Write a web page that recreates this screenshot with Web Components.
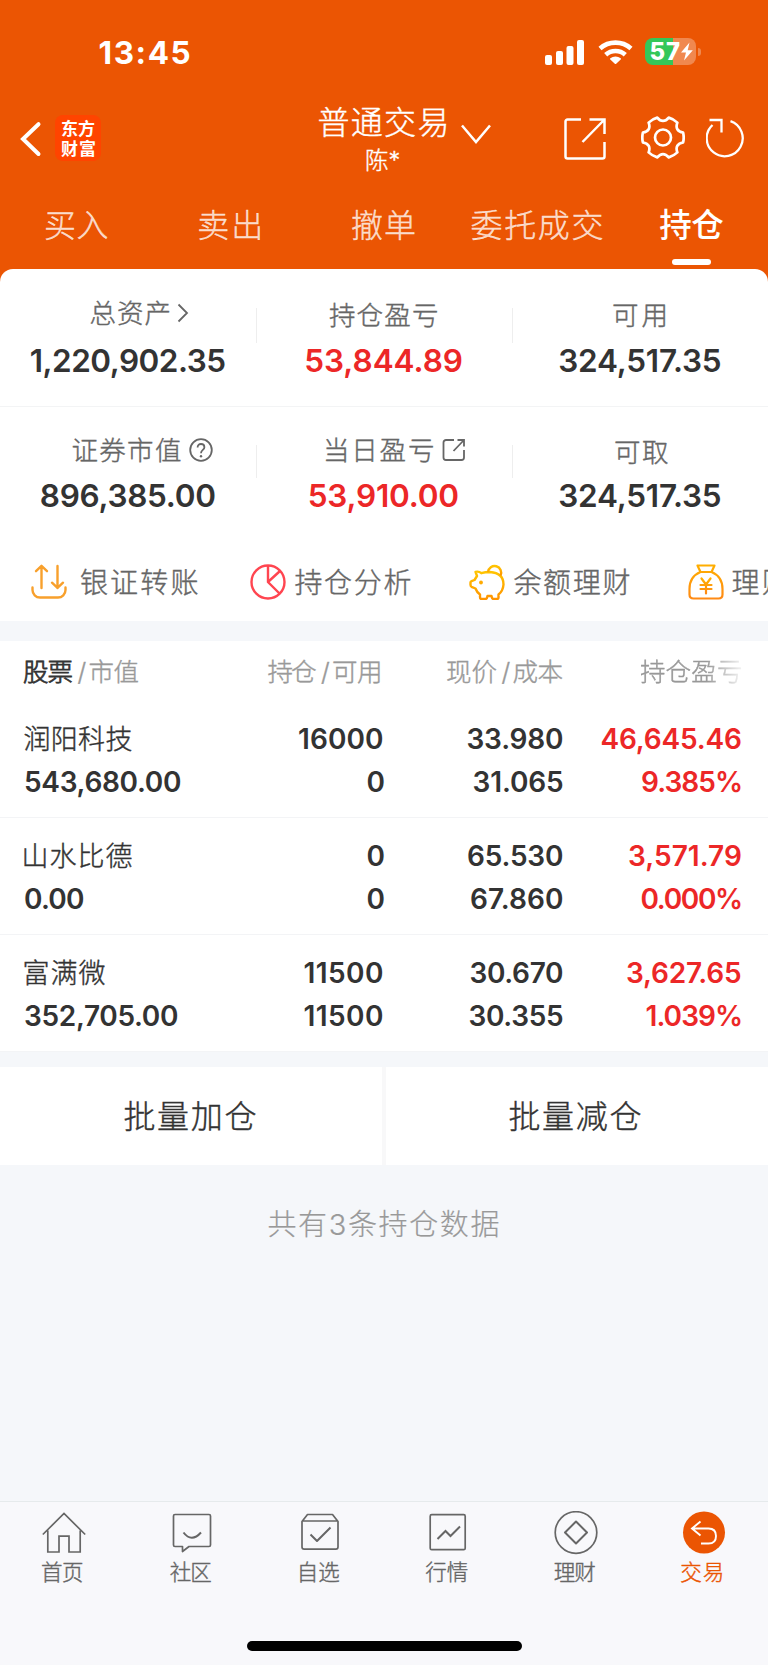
<!DOCTYPE html>
<html lang="zh-CN">
<head>
<meta charset="utf-8">
<title>普通交易 - 持仓</title>
<style>
html,body{margin:0;padding:0}
body{width:768px;height:1665px;overflow:hidden;background:#f5f7fa;font-family:Inter,"Noto Sans CJK SC",sans-serif;color:#333}
</style>
</head>
<body>
<trade-app></trade-app>
<script>
const FONT = 'Inter,"Noto Sans CJK SC",sans-serif';
const pen = document.createElement('canvas').getContext('2d');
const define = (name, html, after) => customElements.define(name, class extends HTMLElement {
  connectedCallback() {
    if (this.shadowRoot) return;
    const root = this.attachShadow({ mode: 'open' });
    const t = document.createElement('template');
    t.innerHTML = typeof html === 'function' ? html(this) : html;
    root.append(t.content.cloneNode(true));
    if (after) after(this, root);
  }
});

/* A line of text tracked so that its glyphs fill exactly w pixels. s: size, b: weight, h: line height.
   Light text gets a hairline stroke, which gives a weight between light and regular. */
define('fit-text', el => {
  const a = n => el.getAttribute(n), s = +a('s'), b = a('b') || 300, w = +a('w'), text = el.textContent;
  pen.font = `${b} ${s}px ${FONT}`;
  const m = pen.measureText(text), ink = m.actualBoundingBoxLeft + m.actualBoundingBoxRight;
  const n = [...text].length, gap = n > 1 ? (w - ink) / (n - 1) : 0;
  const light = b == 300;
  return `<style>:host{display:block;flex:none;width:${w}px;height:${a('h') || 40}px;line-height:${a('h') || 40}px;font-size:${s}px;font-weight:${b};white-space:nowrap}
  span{display:block;width:max-content;margin-left:${(m.actualBoundingBoxLeft - (light ? .6 : 0)).toFixed(2)}px;letter-spacing:${gap.toFixed(3)}px;-webkit-text-stroke:${light ? (a('k') || .4) : 0}px currentColor}</style><span><slot></slot></span>`;
});

/* Six flat teeth joined by hollow curves */
const gearPath = (cx, cy, R, inner, half) => {
  const p = (r, d) => `${(cx + r * Math.cos(d * Math.PI / 180)).toFixed(2)} ${(cy + r * Math.sin(d * Math.PI / 180)).toFixed(2)}`;
  let d = 'M' + p(R, -half);
  for (let k = 0; k < 6; k++) {
    const t = k * 60;
    d += `Q${p(R * 1.03, t)} ${p(R, t + half)}C${p(inner, t + 22)} ${p(inner, t + 38)} ${p(R, t + 60 - half)}`;
  }
  return d + 'Z';
};

const ICONS = {
  signal: [40, 26, '<g fill="#fff"><rect x="0" y="15" width="7" height="10" rx="2"/><rect x="11" y="11" width="7" height="14" rx="2"/><rect x="21.5" y="6" width="7" height="19" rx="2"/><rect x="32" y="0" width="7" height="25" rx="2"/></g>'],
  wifi: [36, 26, '<g fill="none" stroke="#fff" stroke-width="4.6"><path d="M2 9.5a23.5 23.5 0 0 1 31 0"/><path d="M7.7 15.8a14.5 14.5 0 0 1 19.6 0"/></g><path fill="#fff" d="M12.3 19.3a8.2 8.2 0 0 1 10.4 0q.7.6 0 1.3l-4.5 4.2q-.7.6-1.4 0l-4.5-4.2q-.7-.7 0-1.3z"/>'],
  back: [22, 36, '<path d="M18.5 3.2 3 18l15.500 15" fill="none" stroke="#fff" stroke-width="4" stroke-linecap="round" stroke-linejoin="miter"/>'],
  down: [32, 22, '<path d="M2 2.500 16 19 30 2.500" fill="none" stroke="#fff" stroke-width="2.500"/>'],
  share: [42, 42, '<g fill="none" stroke="#fff" stroke-width="2.500"><path d="M17 1.500H3.500a2 2 0 0 0-2 2v35a2 2 0 0 0 2 2h35a2 2 0 0 0 2-2V24"/><path d="M25.500 1.500h15V16M40.500 1.500 18.500 24"/></g>'],
  gear: [44, 43, `<g fill="none" stroke="#fff" stroke-width="2.700" stroke-linejoin="round"><path d="${gearPath(22, 21.5, 20.7, 15.6, 14)}"/><circle cx="22" cy="21.500" r="8"/></g>`],
  refresh: [40, 40, '<g fill="none" stroke="#fff" stroke-width="2.300"><path d="M6.500 7A18 18 0 1 0 24.500 3.200"/><path d="M3.500 2h12v12.500"/></g>'],
  more: [12, 20, '<path d="M1.500 1.500 10 10l-8.500 8.500" fill="none" stroke="#666" stroke-width="1.800"/>'],
  help: [24, 24, '<g fill="none" stroke="#666" stroke-width="1.800"><circle cx="12" cy="12" r="10.800"/><path d="M8.600 9.400c0-2 1.400-3.400 3.400-3.400s3.400 1.300 3.400 3.200c0 2.600-3.400 2.800-3.400 6"/></g><circle cx="12" cy="18.200" r="1.200" fill="#666"/>'],
  open: [24, 24, '<g fill="none" stroke="#666" stroke-width="1.800"><path d="M12 2H4a2.500 2.500 0 0 0-2.500 2.500v15A2.500 2.500 0 0 0 4 22h15.500a2.500 2.500 0 0 0 2.500-2.500V12"/><path d="M15.500 2H22v6.500M22 2 11.500 13"/></g>'],
  transfer: [36, 36, '<g fill="none" stroke="#f8a02c" stroke-width="2.400" stroke-linecap="round" stroke-linejoin="round"><path d="M10.500 24V2M5 7.200 10.500 1.800l5.500 5.400M26.500 2v22M21 18.700l5.500 5.200 5.500-5.200"/><path d="M1.500 23.500V26a7.500 7.500 0 0 0 7.500 7.500h18a7.500 7.500 0 0 0 7.500-7.500v-2.500"/></g>'],
  pie: [36, 36, '<g fill="none" stroke="#ff4550" stroke-width="2.400"><circle cx="18" cy="18" r="16.500"/><path d="M18 1.500V18L30 30M18 18 30 7"/></g>'],
  pig: [36, 36, '<defs><linearGradient id="g" x1="0" y1="0" x2="0" y2="1"><stop stop-color="#ffc400"/><stop offset="1" stop-color="#ff9400"/></linearGradient></defs><g fill="none" stroke="url(#g)" stroke-width="2.400" stroke-linejoin="round"><path d="M6.500 7.800Q10 7 12.300 9.200 16 8 21 8 34.500 9 34.500 20.500 34 27 29.500 30.500V33.500Q29.500 35 28 35H24.500Q23 35 22.500 32H18.500Q18 35 16.500 35H12.500Q11 35 11 33V30.500Q8 28.500 6.500 24.500L2.500 22.800Q1.500 22.200 1.500 20.700V18.500Q1.500 17.500 2.500 17.200L5.500 16 8 12Z"/><path d="M19 8a6.600 6.600 0 1 1 12.500 3.500"/></g><circle cx="12" cy="18.500" r="1.900" fill="#ffaa00"/>'],
  bag: [36, 36, '<defs><linearGradient id="h" x1="0" y1="0" x2="0" y2="1"><stop stop-color="#ffae00"/><stop offset="1" stop-color="#ff8a14"/></linearGradient></defs><g fill="none" stroke="url(#h)" stroke-width="2.200" stroke-linejoin="round" stroke-linecap="round"><path d="M9.500 1.500h17L23.500 8h-11zM12.500 8Q1.500 12.500 1.500 25V30.500Q1.500 34.500 5.500 34.500H30.500Q34.500 34.500 34.500 30.500V25Q34.500 12.500 23.500 8"/><path d="M13.500 14.500 18 20.500l4.500-6M12.500 21h11M12.500 25h11M18 21v8.500"/></g>'],
  home: [44, 44, '<g fill="none" stroke="#666" stroke-width="1.700"><path d="M.8 23.500 22 2.500l21.200 21M5.800 19.500V41H17V25.200h10V41h11.200V19.500"/></g>'],
  chat: [44, 44, '<g fill="none" stroke="#666" stroke-width="1.700" stroke-linejoin="round"><path d="M5 3.500h34q1.500 0 1.500 1.500v29q0 1.500-1.500 1.500H19l-6.500 5v-5H5q-1.500 0-1.500-1.500V5q0-1.500 1.500-1.500z"/><path d="M13.500 21.500q8 10.500 17.500 0" stroke-width="2"/></g>'],
  pick: [44, 44, '<g fill="none" stroke="#666" stroke-width="1.700" stroke-linejoin="round"><path d="M4 10.500V36q0 2.200 2.200 2.200h31.600q2.200 0 2.200-2.200V10.500L34.500 3.500h-25zM4 10h36"/><path d="m12.500 23.500 6.500 6.500L32.500 16.500" stroke-width="2"/></g>'],
  chart: [44, 44, '<g fill="none" stroke="#666" stroke-width="1.700"><rect x="4.200" y="3.700" width="35" height="35" rx="1.500"/><path d="m11.500 28 8-8 5 5 9.500-9.500" stroke-width="2"/></g>'],
  money: [44, 44, '<g fill="none" stroke="#666" stroke-width="1.700" stroke-linejoin="round"><circle cx="22" cy="21.500" r="20.800"/><path d="M22 10.500 33 21.500 22 32.500 11 21.500z" stroke-width="2"/></g>'],
  trade: [44, 44, '<circle cx="22" cy="21.500" r="21" fill="#eb5503"/><path d="M18.500 10.500 10 17.500l8.500 7M10 17.500h16.500q7.500 0 7.500 7.500t-7.500 7.500H19" fill="none" stroke="#fff" stroke-width="1.900"/>']
};
define('line-icon', el => {
  const [w, h, art] = ICONS[el.getAttribute('name')];
  return `<style>:host{display:block;flex:none}svg{display:block}</style><svg width="${w}" height="${h}" viewBox="0 0 ${w} ${h}">${art}</svg>`;
});

define('status-bar', `<style>
:host{display:flex;height:104px;color:#fff;padding-left:99.500px;box-sizing:border-box}
fit-text{margin-top:32.500px}
.sig{margin:39.500px 0 0 355px}.wifi{margin:38.500px 0 0 13px}
.bat{margin:38px 0 0 11.500px;width:51px;height:27px;border-radius:8px;background:linear-gradient(90deg,#34c759 28.500px,#f0884f 28.500px);display:flex;box-sizing:border-box;padding-left:5.500px}
.bat fit-text{margin:0}.bat svg{margin:4px 0 0 0}
.cap{width:3px;height:8px;margin:47.500px 0 0 2px;border-radius:0 4px 4px 0;background:#f0884f}
</style><fit-text s="31.500" b="700" w="90">13:45</fit-text><line-icon class="sig" name="signal"></line-icon><line-icon class="wifi" name="wifi"></line-icon>
<div class="bat"><fit-text s="24" b="800" w="29.500" h="27.500">57</fit-text><svg width="14" height="19" viewBox="0 0 14 19"><path d="M9.500.5 1 10.500h5L4 18.500l8.800-10.300H7.700z" fill="#fff"/></svg></div><div class="cap"></div>`);

define('app-header', `<style>
:host{display:grid;grid-template-columns:319px 210px 1fr;height:76px;color:#fff}
.l,.r{display:flex}.back{margin:16.500px 0 0 20px}
.logo{margin:11px 0 0 13px;width:46px;height:46px;border-radius:8px;background:#ff4400;display:flex;flex-direction:column;align-items:center;box-sizing:border-box;padding-top:3.500px}
.t{display:flex}.t fit-text{margin-top:1px}.t line-icon{margin:19px 0 0 13px}
.s{margin:-5px 0 0 47.500px}
.r line-icon:nth-child(1){margin:14px 0 0 35px}.r line-icon:nth-child(2){margin:12px 0 0 34.500px}.r line-icon:nth-child(3){margin:14px 0 0 21px}
</style><div class="l"><line-icon class="back" name="back"></line-icon><div class="logo"><fit-text s="17" b="700" w="34" h="20">东方</fit-text><fit-text s="17" b="700" w="34" h="20">财富</fit-text></div></div>
<div><div class="t"><fit-text s="32" w="128" h="36">普通交易</fit-text><line-icon name="down"></line-icon></div><fit-text class="s" s="23.500" w="33.500" h="42">陈*</fit-text></div>
<div class="r"><line-icon name="share"></line-icon><line-icon name="gear"></line-icon><line-icon name="refresh"></line-icon></div>`);

define('trade-tabs', `<style>
:host{display:grid;grid-template-columns:repeat(5,1fr);height:89px;color:rgba(255,255,255,.76)}
div{display:flex;flex-direction:column;align-items:center;padding-top:26px}
.on{color:#fff}.on i{width:39px;height:6px;border-radius:3px;background:#fff;margin-top:13px}
</style><div><fit-text s="32" w="62.500">买入</fit-text></div><div><fit-text s="32" w="61">卖出</fit-text></div><div><fit-text s="32" w="63">撤单</fit-text></div><div><fit-text s="32" w="131">委托成交</fit-text></div><div class="on"><fit-text s="32.500" b="500" w="64">持仓</fit-text><i></i></div>`);

define('stat-cell', el => {
  const a = n => el.getAttribute(n);
  return `<style>:host{display:flex;flex-direction:column}
  .l{display:flex;height:${a('lh')}px;color:#666;box-sizing:border-box;padding:${a('y') - 20}px 0 0 ${a('x')}px}
  line-icon{margin:${a('it') || 8}px 0 0 ${a('ig') || 7}px}
  .v{align-self:center;color:${el.hasAttribute('up') ? '#ec2727' : '#333'}}</style>
  <div class="l"><fit-text s="26.500" w="${a('lw')}">${a('label')}</fit-text>${a('icon') ? `<line-icon name="${a('icon')}"></line-icon>` : ''}</div>
  <fit-text class="v" s="31.500" b="600" h="48.500" w="${a('vw')}">${a('value')}</fit-text>`;
});
define('stat-panel', `<style>
:host{display:block;background:#fff;border-radius:13px 13px 0 0}
.row{display:grid;grid-template-columns:repeat(3,256px);height:137px;border-bottom:1px solid #f3f4f5;background:linear-gradient(#eee,#eee) 256px 39px/1px 35px no-repeat,linear-gradient(#eee,#eee) 512px 39px/1px 35px no-repeat}
.row+.row{border:0;background-position:256px 38px,512px 38px;background-size:1px 33px}
</style><div class="row">
<stat-cell lh="68" y="43.500" x="91" lw="79" label="总资产" icon="more" it="10.500" value="1,220,902.35" vw="194.500"></stat-cell>
<stat-cell up lh="68" y="45.700" x="73.500" lw="108" label="持仓盈亏" value="53,844.89" vw="155.500"></stat-cell>
<stat-cell lh="68" y="45.700" x="101.500" lw="52.500" label="可用" value="324,517.35" vw="161.500"></stat-cell></div>
<div class="row">
<stat-cell lh="64.500" y="43" x="73" lw="108.500" label="证券市值" icon="help" value="896,385.00" vw="174.500"></stat-cell>
<stat-cell up lh="64.500" y="43" x="70.500" lw="107" label="当日盈亏" icon="open" ig="8" it="7.500" value="53,910.00" vw="148.500"></stat-cell>
<stat-cell lh="64.500" y="45" x="103.500" lw="53" label="可取" value="324,517.35" vw="161.500"></stat-cell></div>`);

define('quick-links', `<style>
:host{display:flex;height:77px;background:#fff;color:#666;overflow:hidden;width:768px}
fit-text{margin-top:18.500px}line-icon{margin-top:20px}
</style><line-icon name="transfer" style="margin-left:31px"></line-icon><fit-text s="28" w="116.500" style="margin-left:14.500px">银证转账</fit-text>
<line-icon name="pie" style="margin-left:52px"></line-icon><fit-text s="28" w="116" style="margin-left:9px">持仓分析</fit-text>
<line-icon name="pig" style="margin-left:58px"></line-icon><fit-text s="28" w="116" style="margin-left:9px">余额理财</fit-text>
<line-icon name="bag" style="margin-left:58px"></line-icon><fit-text s="28" w="56.500" style="margin-left:9px">理财</fit-text>`);

define('table-head', `<style>
:host{display:grid;grid-template-columns:175px 181px 182.500px 178.500px;padding-left:24.500px;height:60px;background:#fff;color:#999}
div{display:flex;padding-top:11px}.e{justify-content:flex-end}
.a{margin:0 4px 0 5px}.fade{-webkit-mask:linear-gradient(90deg,#000 65px,transparent 106px);mask:linear-gradient(90deg,#000 65px,transparent 106px)}
</style><div><fit-text s="25.500" k=".75" w="48.500" style="color:#333">股票</fit-text><fit-text class="a" s="25" w="8">/</fit-text><fit-text s="25.500" w="49">市值</fit-text></div>
<div class="e"><fit-text s="25.500" w="48.500">持仓</fit-text><fit-text class="a" s="25" w="8">/</fit-text><fit-text s="25.500" w="47">可用</fit-text></div>
<div class="e"><fit-text s="25.500" w="49.500">现价</fit-text><fit-text class="a" s="25" w="8">/</fit-text><fit-text s="25.500" w="49">成本</fit-text></div>
<div class="e"><fit-text class="fade" s="25.500" w="101">持仓盈亏</fit-text></div>`);

define('holding-row', el => {
  const v = el.getAttribute('data').split('|').map(x => x.split('@'));
  return `<style>:host{display:grid;grid-template-columns:157px 201px 180px 178px;grid-auto-rows:43px;padding:17px 0 0 25px;box-sizing:border-box;border-bottom:1px solid #f3f4f6;height:117px;background:#fff;justify-items:end}
  fit-text:nth-of-type(4n+1){justify-self:start}fit-text:nth-of-type(4n){color:#ec2727}</style>` +
  v.map(([t, w], i) => `<fit-text s="${i ? 28 : 27}" b="${i ? 600 : 300}" h="43" w="${w}">${t}</fit-text>`).join('');
});

define('batch-actions', `<style>
:host{display:grid;grid-template-columns:382px 382px;gap:4px;height:98px;background:#f8f8f9;margin-top:15px}
div{background:#fff;display:flex;padding:30px 0 0 125px}div+div{padding-left:124px}
</style><div><fit-text s="32" w="131">批量加仓</fit-text></div><div><fit-text s="32" w="131">批量减仓</fit-text></div>`);

define('tab-bar', `<style>
:host{display:block;height:164px;background:#f8f8fb;border-top:1px solid #e6eaec;box-sizing:border-box;color:#666}
nav{display:grid;grid-template-columns:repeat(6,128px);height:139px}
div{display:flex;flex-direction:column;align-items:center;padding-top:9px}
fit-text{margin:-3px 2px 0 0}.on{color:#eb5503}
.bar{display:block;width:275px;height:9.500px;border-radius:5px;background:#000;margin:0 auto}
</style><nav><div><line-icon name="home"></line-icon><fit-text s="21.500" w="41">首页</fit-text></div>
<div><line-icon name="chat"></line-icon><fit-text s="21.500" w="41.500">社区</fit-text></div>
<div><line-icon name="pick"></line-icon><fit-text s="21.500" w="39.500" style="margin-right:0">自选</fit-text></div>
<div><line-icon name="chart"></line-icon><fit-text s="21.500" w="42.500">行情</fit-text></div>
<div><line-icon name="money"></line-icon><fit-text s="21.500" w="41.500">理财</fit-text></div>
<div class="on"><line-icon name="trade"></line-icon><fit-text s="21.500" w="41.500" style="margin-right:3px">交易</fit-text></div></nav><span class="bar"></span>`);

define('trade-app', `<style>
:host{display:flex;flex-direction:column;width:768px;height:1665px;background:#f5f7fa}
header{background:linear-gradient(#eb5503 285px,#fff 285px);flex:none}
quick-links{margin-bottom:20px}
.note{color:#999;margin:40px 0 0 269px}
tab-bar{margin-top:auto;flex:none}
</style><header><status-bar></status-bar><app-header></app-header><trade-tabs></trade-tabs><stat-panel></stat-panel></header>
<quick-links></quick-links><table-head></table-head>
<holding-row data="润阳科技@107|16000@84|33.980@95.500|46,645.46@139.500|543,680.00@156|0@15.500|31.065@89.500|9.385%@99"></holding-row>
<holding-row data="山水比德@107|0@15.500|65.530@95|3,571.79@112|0.00@59|0@15.500|67.860@92|0.000%@99.500"></holding-row>
<holding-row data="富满微@80|11500@78.500|30.670@92.500|3,627.65@114|352,705.00@153|11500@78.500|30.355@93.500|1.039%@94.500"></holding-row>
<batch-actions></batch-actions><fit-text class="note" s="29" k=".2" w="230">共有3条持仓数据</fit-text><tab-bar></tab-bar>`);
</script>
</body>
</html>
